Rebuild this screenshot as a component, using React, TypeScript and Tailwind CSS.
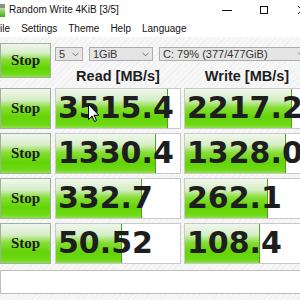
import { ChevronDown } from 'lucide-react'

const rows = [
  { read: '3515.4', write: '2217.2', readBar: 112, writeBar: 107 },
  { read: '1330.4', write: '1328.0', readBar: 100, writeBar: 101 },
  { read: '332.7', write: '262.1', readBar: 86, writeBar: 83 },
  { read: '50.52', write: '108.4', readBar: 66, writeBar: 75 },
]

const greenFill =
  'bg-[linear-gradient(to_bottom,#f1f6ee_0%,#d6eec6_28%,#86de34_48%,#63d406_72%,#6fd916_92%,#8fe24c_100%)]'

const StopButton = ({ tall }: { tall?: boolean }) => (
  <div
    className={`w-[51px] ${tall ? 'h-[35px]' : 'h-[41px]'} shrink-0 border border-[#9fb09c] ${greenFill} flex items-center justify-center`}
  >
    <span className="font-['Liberation_Serif',serif] font-bold text-[15px] text-[#1c1c1c] leading-none">Stop</span>
  </div>
)

const ResultCell = ({ value, bar }: { value: string; bar: number }) => (
  <div className="relative w-[126px] h-[41px] shrink-0 border border-[#c9c9c9] bg-white overflow-hidden">
    <div
      className={`absolute left-0 top-0 bottom-0 ${greenFill} border-r border-[#4f9f22]`}
      style={{ width: bar }}
    />
    <div className="relative pl-[2px] font-['DejaVu_Sans',sans-serif] font-bold text-[30px] leading-[37px] text-[#1e1e1e] whitespace-nowrap">
      {value}
    </div>
  </div>
)

const Select = ({ label, width }: { label: string; width: string }) => (
  <div
    className={`${width} h-[14px] shrink-0 border border-[#adadad] bg-[#e5e5e5] flex items-center pl-[3px] pr-[1px] text-[11px] text-[#333] leading-none`}
  >
    <span className="flex-1 whitespace-nowrap">{label}</span>
    <ChevronDown className="w-[11px] h-[11px] text-[#444]" strokeWidth={1.5} />
  </div>
)

export default function App() {
  return (
    <div className="relative w-[300px] h-[300px] overflow-hidden bg-white font-['Liberation_Sans',Arial,sans-serif] text-[#111]">
      {/* title bar */}
      <div className="h-[20px] flex items-center">
        <div className="w-[5px] h-[13px] mt-[1px] flex flex-col shrink-0">
          <div className="h-[4px] bg-[#8a8f88]" />
          <div className="flex-1 bg-[linear-gradient(to_bottom,#b7e690,#3cae14)]" />
        </div>
        <span className="ml-[4px] text-[10px] leading-none whitespace-nowrap">Random Write 4KiB [3/5]</span>
        <div className="ml-auto flex items-center">
          <div className="w-[10px] h-[1px] bg-[#111] mr-[28px]" />
          <div className="w-[8px] h-[8px] border border-[#111] mr-[29px]" />
          <svg width="10" height="10" viewBox="0 0 10 10" className="-mr-[7px]">
            <path d="M1 1 L9 9 M9 1 L1 9" stroke="#111" strokeWidth="1" />
          </svg>
        </div>
      </div>

      <div className="h-[17px] flex items-center gap-[11px] -ml-[6px] text-[10px] leading-none whitespace-nowrap">
        <span>File</span>
        <span>Settings</span>
        <span>Theme</span>
        <span>Help</span>
        <span>Language</span>
      </div>

      {/* main */}
      <div className="h-[263px] pt-[6px] bg-[repeating-linear-gradient(135deg,#f7f7f7_0px,#f7f7f7_3px,#efefef_3px,#efefef_4px)]">
        <div className="flex gap-[4px]">
          <StopButton tall />
          <div className="flex flex-col">
            <div className="flex gap-[6px] mt-[4px]">
              <Select label="5" width="w-[28px]" />
              <Select label="1GiB" width="w-[64px]" />
              <Select label="C: 79% (377/477GiB)" width="w-[150px]" />
            </div>
            <div className="flex gap-[3px] h-[27px] pt-[7px] font-bold text-[14.5px] leading-[16px] text-[#1e1e1e]">
              <div className="w-[126px] text-center whitespace-nowrap">Read [MB/s]</div>
              <div className="w-[126px] text-center whitespace-nowrap">Write [MB/s]</div>
            </div>
          </div>
        </div>

        <div className="flex flex-col gap-[4px]">
          {rows.map((r) => (
            <div key={r.read} className="flex gap-[4px]">
              <StopButton />
              <div className="flex gap-[3px]">
                <ResultCell value={r.read} bar={r.readBar} />
                <ResultCell value={r.write} bar={r.writeBar} />
              </div>
            </div>
          ))}
        </div>

        <div className="mt-[6px] w-[310px] h-[24px] border border-[#bdbdbd] bg-white" />
      </div>

      {/* mouse pointer */}
      <svg className="absolute left-[88px] top-[104px]" width="12" height="19" viewBox="0 0 12 19">
        <path
          d="M0.5 0.5 L0.5 15.5 L4 12 L6.5 17.5 L8.5 16.5 L6 11.2 L10.8 11.2 Z"
          fill="#fff"
          stroke="#000"
          strokeWidth="1"
        />
      </svg>
    </div>
  )
}
